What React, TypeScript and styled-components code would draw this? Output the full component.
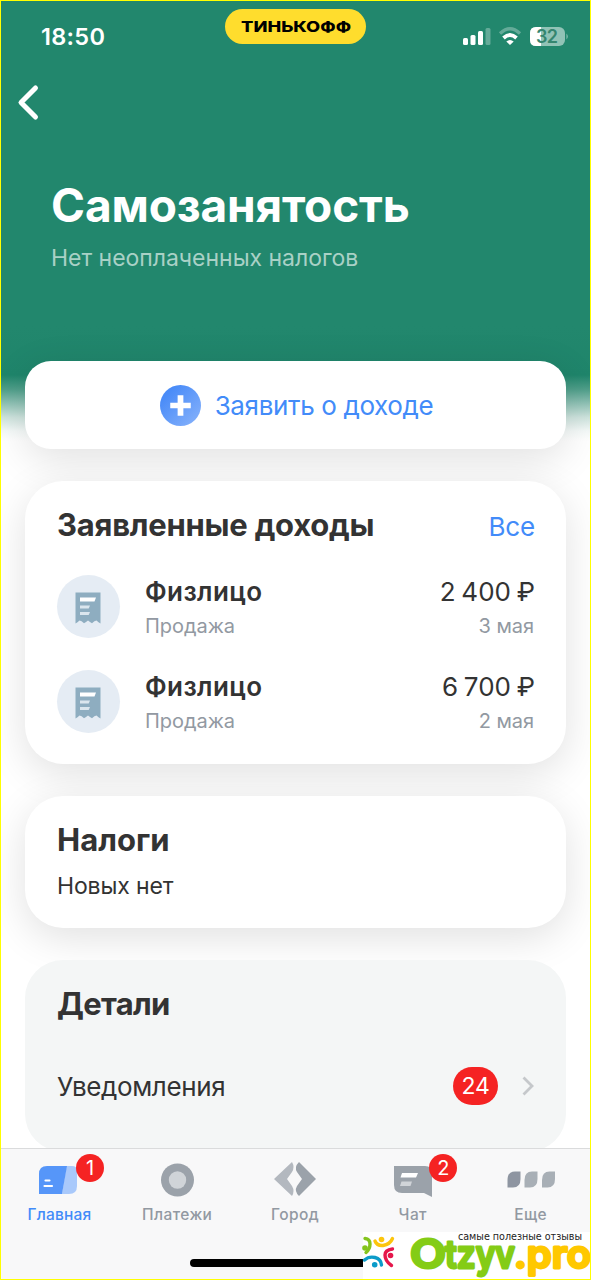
import React from "react";
import styled, { createGlobalStyle } from "styled-components";

const GlobalStyle = createGlobalStyle`
  * { box-sizing: border-box; }
  body { margin: 0; background: #fff; }
`;

const Screen = styled.div`
  position: relative;
  display: flex;
  flex-direction: column;
  width: 591px;
  height: 1280px;
  overflow: hidden;
  border: 1px solid #ffff00;
  background: linear-gradient(
    180deg,
    #22876d 0,
    #22876d 325px,
    #1f856b 374px,
    #4e9e89 388px,
    #8ec1b4 402px,
    #cde3dd 416px,
    #f4f9f8 430px,
    #ffffff 440px
  );
  font-family: Inter, "Liberation Sans", sans-serif;
  color: #333333;
`;

const StatusBar = styled.div`
  display: flex;
  justify-content: space-between;
  height: 70px;
  padding: 8px 21px 0 40px;
`;

const Clock = styled.div`
  width: 184px;
  padding-top: 13px;
  font-size: 23.5px;
  font-weight: 600;
  line-height: 30px;
  letter-spacing: 0.3px;
  color: #fff;
`;

const BrandPill = styled.div`
  display: flex;
  align-items: center;
  justify-content: center;
  width: 141px;
  height: 35px;
  border-radius: 18px;
  background: #ffdd2d;
`;

const StatusIcons = styled.div`
  display: flex;
  justify-content: flex-end;
  width: 203px;
  padding-top: 16px;
`;

const BackButton = styled.div`
  height: 44px;
  padding: 10px 0 0 14px;
`;

const Heading = styled.h1`
  margin: 62px 0 0 50px;
  font-size: 46px;
  line-height: 56px;
  font-weight: 700;
  letter-spacing: -0.15px;
  color: #fff;
`;

const Subheading = styled.p`
  margin: 11px 0 0 50px;
  font-size: 23px;
  line-height: 28px;
  letter-spacing: -0.03px;
  color: #a9d1c6;
`;

const Cards = styled.main`
  display: flex;
  flex-direction: column;
  gap: 32px;
  margin-top: 89px;
  padding: 0 24px;
`;

const Card = styled.section<{ $height: number; $muted?: boolean }>`
  position: relative;
  flex: none;
  height: ${(p) => p.$height}px;
  padding: 24px 31px 0 32px;
  border-radius: 38px;
  background: ${(p) => (p.$muted ? "#f4f6f6" : "#ffffff")};
  box-shadow: ${(p) => (p.$muted ? "none" : "0 10px 40px rgba(0, 0, 0, 0.12)")};
`;

const ActionCard = styled(Card)`
  display: flex;
  align-items: center;
  justify-content: center;
  gap: 14px;
  padding: 0 0 0 2px;
  border-radius: 26px;
`;

const ActionLabel = styled.span`
  padding-top: 2px;
  font-size: 26px;
  line-height: 32px;
  letter-spacing: -0.36px;
  color: #428bf9;
`;

const CardHeader = styled.div`
  display: flex;
  justify-content: space-between;
  align-items: baseline;
`;

const CardTitle = styled.h2<{ $tracking?: number }>`
  margin: 0;
  font-size: 31px;
  line-height: 40px;
  font-weight: 700;
  letter-spacing: ${(p) => p.$tracking ?? -0.25}px;
`;

const AllLink = styled.span`
  font-size: 26px;
  letter-spacing: -0.2px;
  color: #428bf9;
`;

const IncomeRow = styled.div<{ $first?: boolean }>`
  display: flex;
  height: 63px;
  margin-top: ${(p) => (p.$first ? 30 : 32)}px;
`;

const ReceiptBadge = styled.div`
  display: flex;
  align-items: center;
  justify-content: center;
  width: 63px;
  height: 63px;
  padding: 3px 1px 0 0;
  border-radius: 50%;
  background: #e5ecf4;
`;

const RowText = styled.div<{ $end?: boolean }>`
  display: flex;
  flex-direction: column;
  align-items: ${(p) => (p.$end ? "flex-end" : "flex-start")};
  margin-left: ${(p) => (p.$end ? "auto" : "25px")};
`;

const Primary = styled.span<{ $strong?: boolean }>`
  font-size: 26px;
  line-height: 34px;
  font-weight: ${(p) => (p.$strong ? 600 : 400)};
  letter-spacing: ${(p) => (p.$strong ? 0.4 : 0)}px;
  word-spacing: ${(p) => (p.$strong ? 0 : -1.5)}px;
`;

const Secondary = styled.span`
  font-size: 20px;
  line-height: 34px;
  letter-spacing: -0.05px;
  padding-right: 1px;
  color: #9299a2;
`;

const Note = styled.p`
  margin: 12px 0 0;
  font-size: 23px;
  line-height: 28px;
  letter-spacing: -0.15px;
`;

const DetailRow = styled.div`
  display: flex;
  align-items: center;
  height: 40px;
  margin-top: 42px;
  font-size: 26px;
  letter-spacing: -0.38px;
`;

const CountBadge = styled.span`
  display: flex;
  align-items: center;
  justify-content: center;
  width: 45px;
  height: 38px;
  margin: 0 23px 0 auto;
  border-radius: 19px;
  background: #f52323;
  color: #fff;
  font-size: 23px;
`;

const TabBar = styled.nav`
  position: absolute;
  left: 0;
  right: 0;
  bottom: 0;
  display: flex;
  height: 131px;
  border-top: 1px solid #dadbdc;
  background: #f8f8f9;
`;

const Tab = styled.div<{ $active?: boolean }>`
  position: relative;
  display: flex;
  flex: 1;
  flex-direction: column;
  align-items: center;
  padding: 10px 1px 0 0;
  font-size: 15.5px;
  font-weight: 500;
  line-height: 20px;
  letter-spacing: ${(p) => (p.$active ? 0.2 : 0.4)}px;
  color: ${(p) => (p.$active ? "#428bf9" : "#9299a2")};
  svg { margin: 0 ${(p) => (p.$active ? 2 : -1)}px 4px 0; }
`;

const TabBadge = styled.span`
  position: absolute;
  top: 5px;
  left: 75px;
  width: 28px;
  height: 28px;
  border-radius: 50%;
  background: #f52323;
  color: #fff;
  font-size: 20px;
  font-weight: 400;
  line-height: 28px;
  letter-spacing: 0;
  text-align: center;
`;

const HomeIndicator = styled.div`
  position: absolute;
  left: 189px;
  bottom: 12px;
  width: 212px;
  height: 8px;
  border-radius: 4px;
  background: #000;
`;

const SiteMark = styled.div`
  position: absolute;
  right: 0;
  bottom: 0;
  width: 227px;
  height: 47px;
  background: #fff;
  svg { display: block; overflow: visible; }
`;

function Receipt() {
  return (
    <svg width="26" height="32" viewBox="0 0 26 32">
      <path d="M0.500 0.500H25.500V31.500Q23.500 30.500 21.500 28.500Q19.500 28.500 17 31.200Q15 30 13 28.500Q11 30 9 31.200Q6.500 28.500 4.500 28.500Q2.500 30.500 0.500 31.500Z" fill="#8eadc0" />
      <path d="M5 5.500H21L19.500 9.500H5Z" fill="#fff" />
      <path d="M5 13.500H15L13.700 16.500H5ZM5 20H15L13.700 23H5Z" fill="#dbe6ee" />
    </svg>
  );
}

function StatusGlyphs() {
  return (
    <svg width="106" height="22" viewBox="0 0 106 22" fill="#fff">
      <rect x="0" y="13" width="5" height="7" rx="1.500" />
      <rect x="7.500" y="10" width="5" height="10" rx="1.500" />
      <rect x="15" y="6" width="5" height="14" rx="1.500" />
      <rect x="22.500" y="3" width="5" height="17" rx="1.500" opacity="0.3" />
      <g fill="none" stroke="#fff" strokeWidth="3.200">
        <path d="M37 8.500Q47 -1 57 8.500" opacity="0.3" />
        <path d="M40.500 13Q47 7 53.500 13" strokeWidth="3.800" />
      </g>
      <path d="M43.300 16.600Q47 13.500 50.700 16.600L47 20Z" />
      <rect x="67" y="2" width="35" height="19" rx="6" opacity="0.5" />
      <path d="M73 2H78V21H73Q67 21 67 15V8Q67 2 73 2Z" />
      <path d="M103.500 8.500Q106 11.500 103.500 14.500Z" opacity="0.5" />
      <text x="73" y="18" fontSize="18" fontWeight="600" fill="#35866f" textLength="22">32</text>
    </svg>
  );
}

function HomeIcon() {
  return (
    <svg width="38" height="42" viewBox="0 0 38 42">
      <path d="M27.500 7H33Q38 7 38 12V27Q38 35 30 35H23Z" fill="#a9c9fb" />
      <path d="M8 7H28L23 35H0V15Q0 7 8 7Z" fill="#5696f9" />
      <path d="M6.500 21.500H10.500M5.500 27H13" stroke="#fff" strokeWidth="2.200" strokeLinecap="round" />
    </svg>
  );
}

function PaymentsIcon() {
  return (
    <svg width="34" height="42" viewBox="0 0 34 42">
      <circle cx="16.500" cy="21" r="16.500" fill="#9ba2aa" />
      <circle cx="16.500" cy="21" r="8.700" fill="#d0d4d8" />
    </svg>
  );
}

function CityIcon() {
  return (
    <svg width="42" height="42" viewBox="0 0 42 42">
      <path d="M0 20L18 3Q21 8 18 13L13 20L18 27Q21 32 18 37Z" fill="#b3b8bf" />
      <path d="M42 20L25 3Q20 8 23 13L28 20L23 27Q20 32 25 37Z" fill="#9ba2aa" />
    </svg>
  );
}

function ChatIcon() {
  return (
    <svg width="38" height="42" viewBox="0 0 38 42">
      <path d="M0 7H31Q38 7 38 14V38L30 34H8Q0 34 0 26Z" fill="#9ba2aa" />
      <path d="M8 14H24L22 18.500H6.500Z" fill="#fff" />
      <path d="M7.500 22.500H18L16.500 27H6Z" fill="#d0d4d8" />
    </svg>
  );
}

function MoreIcon() {
  return (
    <svg width="48" height="42" viewBox="0 0 48 42">
      <path d="M8 12.500H13.500V20Q13.500 28.500 6 28.500H0.500V21Q0.500 12.500 8 12.500Z" fill="#8e95a1" />
      <path d="M25 12.500H30.500V20Q30.500 28.500 23 28.500H17.500V21Q17.500 12.500 25 12.500Z" fill="#a8afb6" />
      <path d="M42.500 12.500H48V20Q48 28.500 40.500 28.500H35V21Q35 12.500 42.500 12.500Z" fill="#a8afb6" />
    </svg>
  );
}

function OtzyvLogo() {
  return (
    <svg width="227" height="47" viewBox="364 1232 227 47">
      <g fill="none" strokeWidth="3.400" strokeLinecap="round">
        <path d="M366 1238.500Q371 1239 371 1244Q371 1249 367 1252.500" stroke="#84c41d" />
        <path d="M376 1241Q378 1246 384 1245.500Q391 1244.500 393.500 1238.500" stroke="#fcc50d" />
        <path d="M393.500 1249Q386 1250 386 1255Q386 1261 392.500 1265.500" stroke="#e5174b" />
        <path d="M365.500 1260Q370 1256 376 1257.500Q382 1259 382.500 1265" stroke="#0b9bc9" />
      </g>
      <circle cx="366" cy="1248" r="2.800" fill="#84c41d" />
      <circle cx="382.500" cy="1239.500" r="2.800" fill="#fcc50d" />
      <circle cx="391.500" cy="1255.500" r="2.800" fill="#e5174b" />
      <circle cx="375.700" cy="1264.700" r="2.800" fill="#0b9bc9" />
      <text x="459" y="1239.500" fontFamily="'DejaVu Sans'" fontSize="10.500" fill="#222" textLength="124" lengthAdjust="spacingAndGlyphs">
        самые полезные отзывы
      </text>
      <g fontSize="39" fontWeight="600" strokeWidth="2.800" strokeLinejoin="round">
        <g fill="#84cc16" stroke="#84cc16">
          <text x="411" y="1268" textLength="36" lengthAdjust="spacingAndGlyphs">O</text>
          <text x="446" y="1268" textLength="70" lengthAdjust="spacingAndGlyphs">tzyv</text>
        </g>
        <text x="515" y="1268" fill="#ffc800" stroke="#ffc800" textLength="77" lengthAdjust="spacingAndGlyphs">.pro</text>
      </g>
    </svg>
  );
}

const incomes = [
  { name: "Физлицо", kind: "Продажа", sum: "2 400 ₽", date: "3 мая" },
  { name: "Физлицо", kind: "Продажа", sum: "6 700 ₽", date: "2 мая" },
];

const tabs = [
  { label: "Главная", icon: <HomeIcon />, badge: 1, active: true },
  { label: "Платежи", icon: <PaymentsIcon /> },
  { label: "Город", icon: <CityIcon /> },
  { label: "Чат", icon: <ChatIcon />, badge: 2 },
  { label: "Еще", icon: <MoreIcon /> },
];

export default function App() {
  return (
    <Screen>
      <GlobalStyle />
      <StatusBar>
        <Clock>18:50</Clock>
        <BrandPill>
          <svg width="112" height="16" viewBox="0 0 112 16">
            <text x="1" y="13" fontSize="14.500" fontWeight="800" textLength="110" lengthAdjust="spacingAndGlyphs">ТИНЬКОФФ</text>
          </svg>
        </BrandPill>
        <StatusIcons><StatusGlyphs /></StatusIcons>
      </StatusBar>
      <BackButton>
        <svg width="26" height="42" viewBox="0 0 26 42">
          <path d="M20.500 7L6 21.500L20.500 36" fill="none" stroke="#fff" strokeWidth="5" strokeLinecap="round" strokeLinejoin="round" />
        </svg>
      </BackButton>
      <Heading>Самозанятость</Heading>
      <Subheading>Нет неоплаченных налогов</Subheading>
      <Cards>
        <ActionCard $height={88}>
          <svg width="41" height="41" viewBox="0 0 40 40">
            <defs>
              <linearGradient id="plus" x1="0" y1="0" x2="1" y2="1">
                <stop offset="0.200" stopColor="#4a8cf8" />
                <stop offset="1" stopColor="#8ab4fb" />
              </linearGradient>
            </defs>
            <circle cx="20" cy="20" r="20" fill="url(#plus)" />
            <path d="M17.200 10H22.800V17.200H30V22.800H22.800V30H17.200V22.800H10V17.200H17.200Z" fill="#fff" />
          </svg>
          <ActionLabel>Заявить о доходе</ActionLabel>
        </ActionCard>
        <Card $height={283}>
          <CardHeader>
            <CardTitle>Заявленные доходы</CardTitle>
            <AllLink>Все</AllLink>
          </CardHeader>
          {incomes.map((item, i) => (
            <IncomeRow key={item.date} $first={i === 0}>
              <ReceiptBadge><Receipt /></ReceiptBadge>
              <RowText>
                <Primary $strong>{item.name}</Primary>
                <Secondary>{item.kind}</Secondary>
              </RowText>
              <RowText $end>
                <Primary>{item.sum}</Primary>
                <Secondary>{item.date}</Secondary>
              </RowText>
            </IncomeRow>
          ))}
        </Card>
        <Card $height={132}>
          <CardTitle $tracking={0}>Налоги</CardTitle>
          <Note>Новых нет</Note>
        </Card>
        <Card $height={192} $muted>
          <CardTitle $tracking={-0.7}>Детали</CardTitle>
          <DetailRow>
            Уведомления
            <CountBadge>24</CountBadge>
            <svg width="14" height="22" viewBox="0 0 14 22">
              <path d="M2.500 2.500L11 11L2.500 19.500" fill="none" stroke="#c5c8cb" strokeWidth="2.800" />
            </svg>
          </DetailRow>
        </Card>
      </Cards>
      <TabBar>
        {tabs.map((t) => (
          <Tab key={t.label} $active={t.active}>
            {t.icon}
            {t.label}
            {t.badge && <TabBadge>{t.badge}</TabBadge>}
          </Tab>
        ))}
      </TabBar>
      <HomeIndicator />
      <SiteMark><OtzyvLogo /></SiteMark>
    </Screen>
  );
}
